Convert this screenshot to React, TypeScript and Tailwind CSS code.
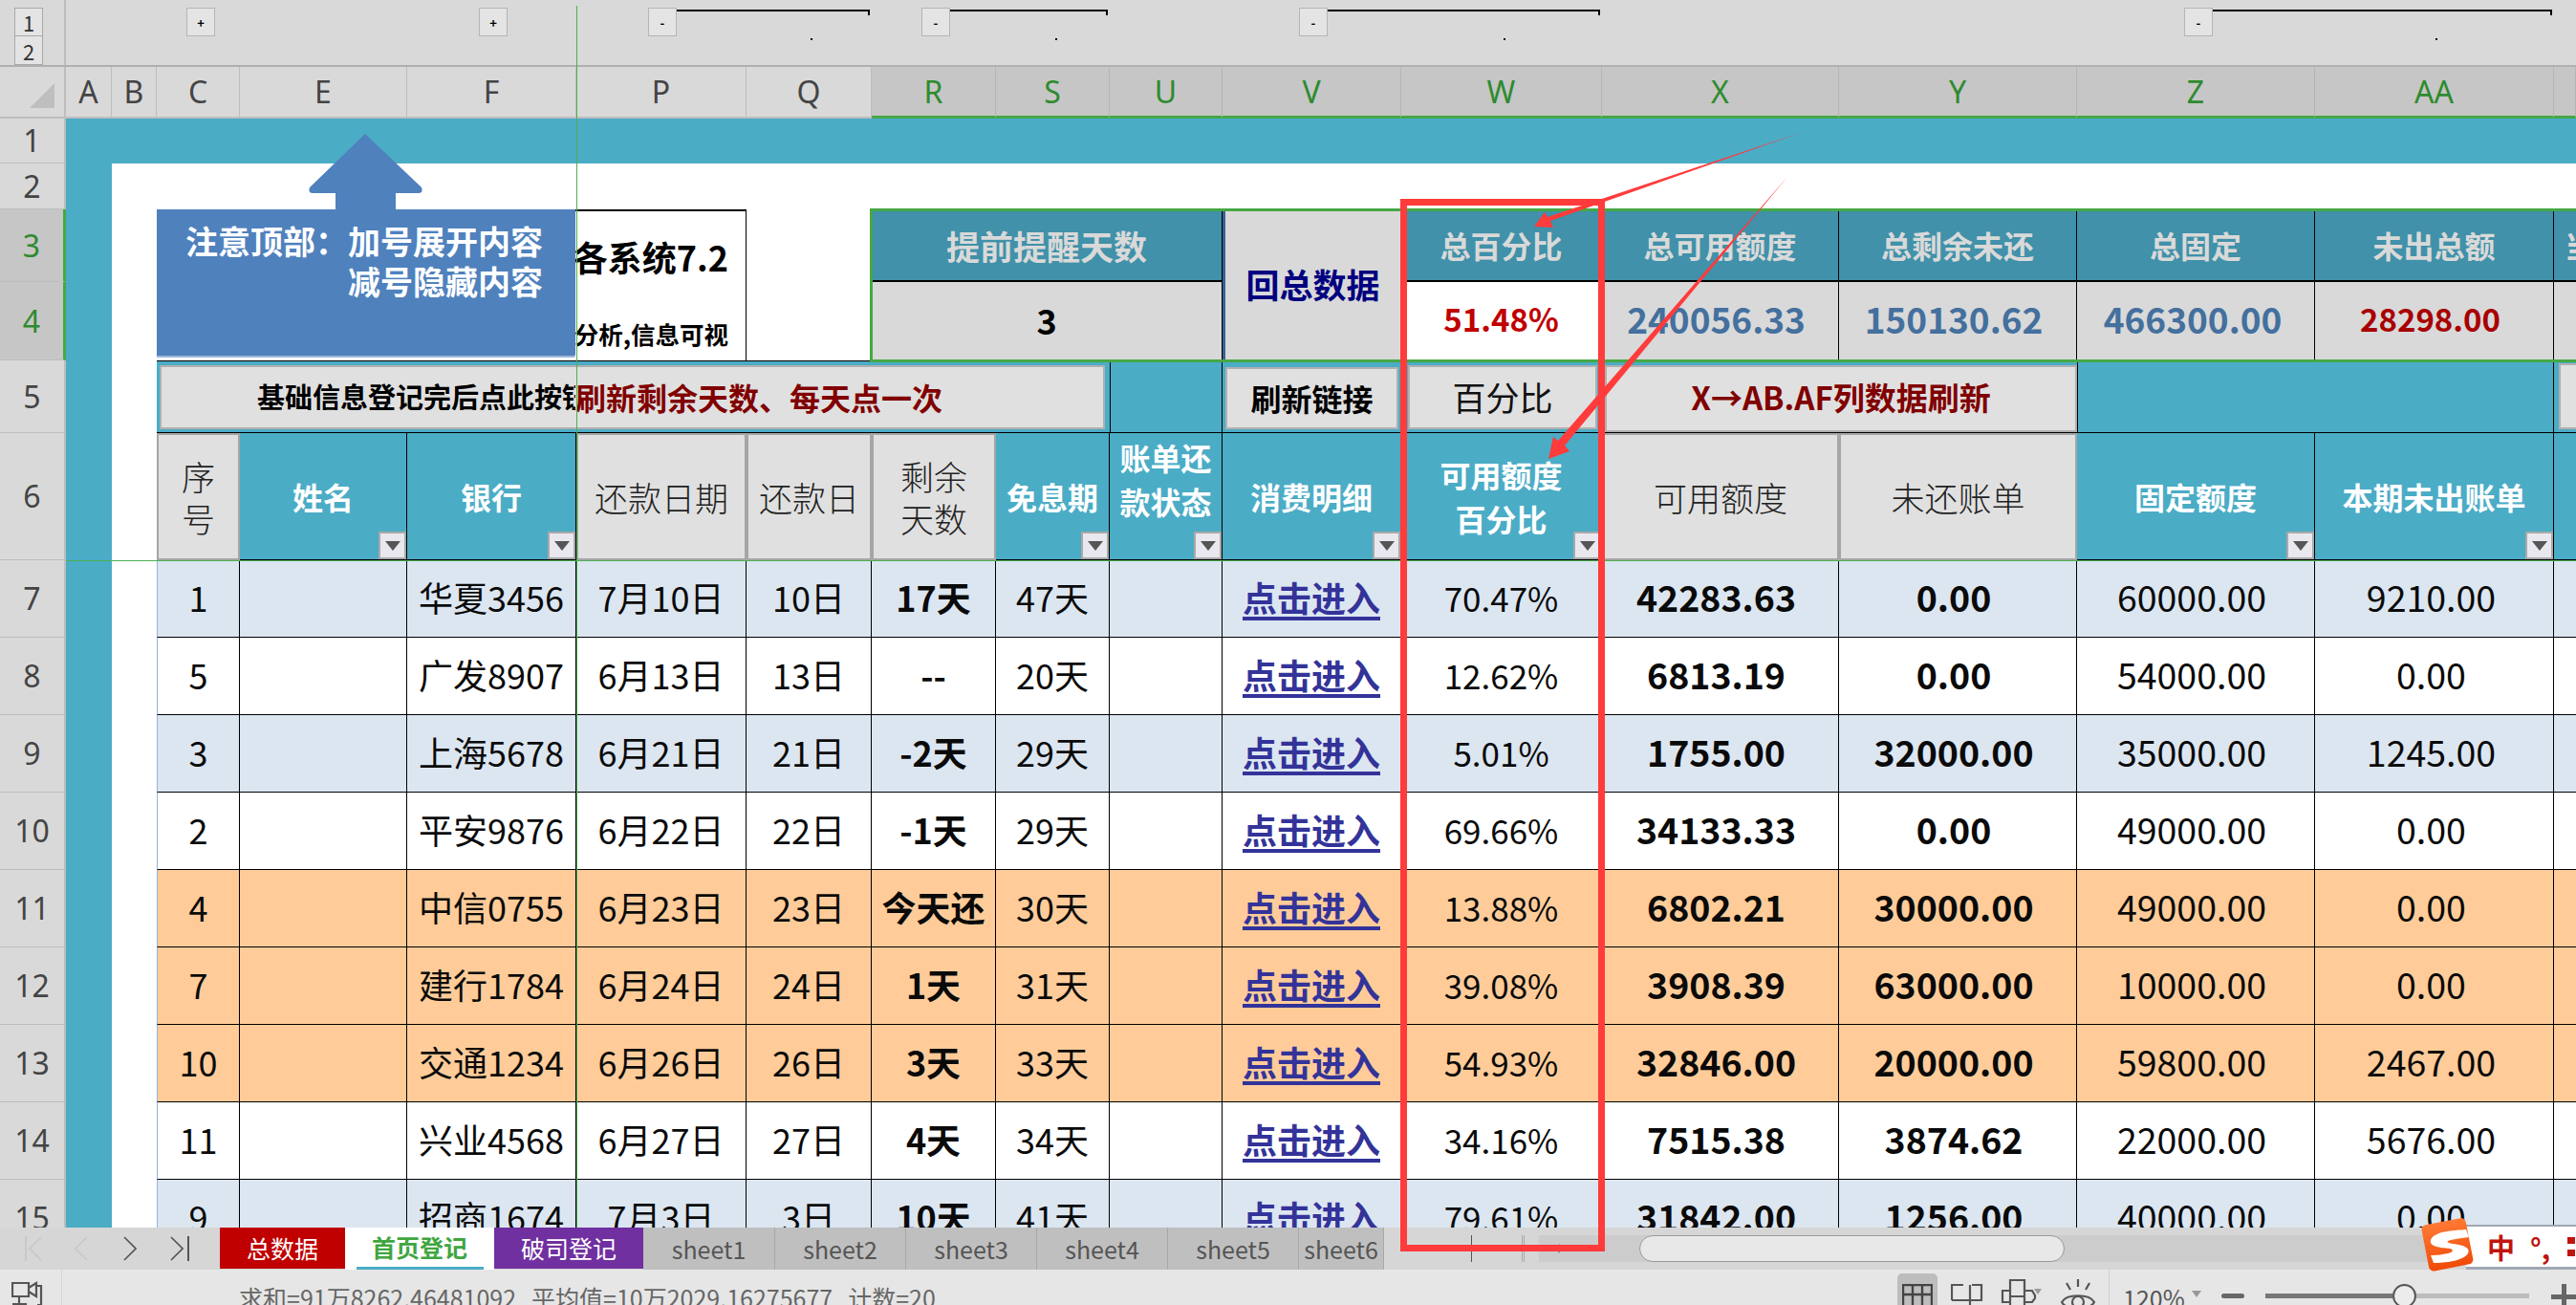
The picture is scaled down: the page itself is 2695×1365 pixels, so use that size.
const cols = 'grid grid-cols-[69px_48px_47px_87px_175px_177px_178px_131px_130px_119px_118px_187px_210px_248px_249px_249px_250px_23px]'

interface Row {
  no: number; seq: string; bank: string; date: string; day: string; left: string; free: string
  pct: string; avail: string; unpaid: string; fixed: string; bill: string; bg: string
}

const blue = 'bg-[#dce6f1]'
const white = 'bg-white'
const orange = 'bg-[#ffcc99]'

const rows: Row[] = [
  { no: 7, seq: '1', bank: '华夏3456', date: '7月10日', day: '10日', left: '17天', free: '47天', pct: '70.47%', avail: '42283.63', unpaid: '0.00', fixed: '60000.00', bill: '9210.00', bg: blue },
  { no: 8, seq: '5', bank: '广发8907', date: '6月13日', day: '13日', left: '--', free: '20天', pct: '12.62%', avail: '6813.19', unpaid: '0.00', fixed: '54000.00', bill: '0.00', bg: white },
  { no: 9, seq: '3', bank: '上海5678', date: '6月21日', day: '21日', left: '-2天', free: '29天', pct: '5.01%', avail: '1755.00', unpaid: '32000.00', fixed: '35000.00', bill: '1245.00', bg: blue },
  { no: 10, seq: '2', bank: '平安9876', date: '6月22日', day: '22日', left: '-1天', free: '29天', pct: '69.66%', avail: '34133.33', unpaid: '0.00', fixed: '49000.00', bill: '0.00', bg: white },
  { no: 11, seq: '4', bank: '中信0755', date: '6月23日', day: '23日', left: '今天还', free: '30天', pct: '13.88%', avail: '6802.21', unpaid: '30000.00', fixed: '49000.00', bill: '0.00', bg: orange },
  { no: 12, seq: '7', bank: '建行1784', date: '6月24日', day: '24日', left: '1天', free: '31天', pct: '39.08%', avail: '3908.39', unpaid: '63000.00', fixed: '10000.00', bill: '0.00', bg: orange },
  { no: 13, seq: '10', bank: '交通1234', date: '6月26日', day: '26日', left: '3天', free: '33天', pct: '54.93%', avail: '32846.00', unpaid: '20000.00', fixed: '59800.00', bill: '2467.00', bg: orange },
  { no: 14, seq: '11', bank: '兴业4568', date: '6月27日', day: '27日', left: '4天', free: '34天', pct: '34.16%', avail: '7515.38', unpaid: '3874.62', fixed: '22000.00', bill: '5676.00', bg: white },
  { no: 15, seq: '9', bank: '招商1674', date: '7月3日', day: '3日', left: '10天', free: '41天', pct: '79.61%', avail: '31842.00', unpaid: '1256.00', fixed: '40000.00', bill: '0.00', bg: blue },
]

const letters = [
  { t: 'A' }, { t: 'B' }, { t: 'C' }, { t: 'E' }, { t: 'F' }, { t: 'P' }, { t: 'Q' },
  { t: 'R', on: true }, { t: 'S', on: true }, { t: 'U', on: true }, { t: 'V', on: true }, { t: 'W', on: true },
  { t: 'X', on: true }, { t: 'Y', on: true }, { t: 'Z', on: true }, { t: 'AA', on: true }, { t: '', on: true },
]

function OutlineBtn({ label }: { label: string }) {
  return (
    <div className="w-[30px] h-[30px] shrink-0 border border-[#b5b5b5] bg-[#e4e4e4] flex items-center justify-center text-[13px] font-bold leading-none text-black">
      {label}
    </div>
  )
}

function Group({ className, dot }: { className: string; dot: string }) {
  return (
    <div className={`flex pt-[8px] ${className}`}>
      <OutlineBtn label="-" />
      <div className="flex-1 flex flex-col">
        <div className="h-[6px] mt-[2px] border-t-2 border-r-2 border-black" />
        <div className={`w-[2px] h-[2px] mt-[24px] bg-black ${dot}`} />
      </div>
    </div>
  )
}

function OutlineBar() {
  return (
    <div className={`${cols} h-[70px] bg-[#d9d9d9] border-b-2 border-[#b0b0b0]`}>
      <div className="border-r-2 border-[#bdbdbd] pl-[15px] pt-[8px] flex flex-col">
        <div className="w-[30px] h-[30px] border border-[#a8a8a8] bg-[#e4e4e4] flex items-center justify-center text-[22px] leading-none text-[#333]">1</div>
        <div className="w-[30px] h-[30px] border border-t-0 border-[#a8a8a8] bg-[#e4e4e4] flex items-center justify-center text-[22px] leading-none text-[#333]">2</div>
      </div>
      <div className="col-start-4 ml-[31px] pt-[8px]"><OutlineBtn label="+" /></div>
      <div className="col-start-6 ml-[75px] pt-[8px]"><OutlineBtn label="+" /></div>
      <Group className="col-start-7 col-span-2 ml-[75px] mr-[2px]" dot="ml-[140px]" />
      <Group className="col-start-9 col-span-2 ml-[52px] mr-[2px]" dot="ml-[110px]" />
      <Group className="col-start-12 col-span-2 ml-[80px] mr-[2px]" dot="ml-[184px]" />
      <Group className="col-start-16 col-span-2 ml-[112px] mr-[2px]" dot="ml-[233px]" />
    </div>
  )
}

function ColHeader() {
  return (
    <div className={`${cols} h-[54px] bg-[#d9d9d9] text-[32px] leading-none font-['Noto_Sans',sans-serif]`}>
      <div className="border-r-2 border-b-2 border-[#bdbdbd] overflow-hidden">
        <div className="mt-[17px] ml-[31px] w-0 h-0 border-l-[26px] border-l-transparent border-b-[26px] border-b-[#bfbfbf]" />
      </div>
      {letters.map((c, i) => (
        <div key={i} className={c.on
          ? 'flex items-center justify-center bg-[#c6c6c6] text-[#2e8b2e] border-r border-[#b5b5b5] border-b-[3px] border-b-[#45a845]'
          : 'flex items-center justify-center text-[#444] border-r border-b-2 border-[#bdbdbd]'}>
          {c.t}
        </div>
      ))}
    </div>
  )
}

function RowNo({ n, on }: { n: number; on?: boolean }) {
  return (
    <div className={`flex items-center justify-center text-[32px] leading-none font-['Noto_Sans',sans-serif] border-b border-[#bdbdbd] ${on ? 'bg-[#c6c6c6] text-[#2e8b2e] border-r-[3px] border-r-[#45a845]' : 'bg-[#d9d9d9] text-[#444] border-r-2 border-r-[#bdbdbd]'}`}>
      {n}
    </div>
  )
}

function Teal() {
  return <div className="bg-[#4bacc6]" />
}

const headDark = 'flex items-center justify-center bg-[#4091a9] text-[#d9d9d9] font-bold text-[32px] border-r border-b-2 border-black'
const valCell = 'flex items-center justify-center bg-[#d9d9d9] font-bold border-r border-black pb-[5px]'
const grayHead = 'flex items-center justify-center text-center bg-[#e0e0e0] border-2 border-[#a6a6a6] text-[35px] font-light leading-[44px] text-[#222]'
const btn = 'flex items-center justify-center bg-[#e0e0e0] border-2 border-[#b0b0b0] whitespace-nowrap'

function FilterBtn() {
  return (
    <div className="absolute right-0 bottom-0 w-[29px] h-[29px] bg-[#e8e8ee] border-2 border-[#a9a9a9] flex items-center justify-center">
      <div className="w-0 h-0 border-x-[8px] border-x-transparent border-t-[10px] border-t-[#555]" />
    </div>
  )
}

function TealHead({ children }: { children: React.ReactNode }) {
  return (
    <div className="relative flex items-center justify-center text-center bg-[#4bacc6] text-white font-bold text-[32px] leading-[46px] border-r border-b border-black">
      {children}
      <FilterBtn />
    </div>
  )
}

function Sheet() {
  const cell = 'flex items-center justify-center border-r border-b border-black text-[#0a0a0a] whitespace-nowrap pb-[4px]'
  return (
    <div className="flex-1 min-h-0 overflow-hidden bg-white">
      <div className={`${cols} grid-rows-[47px_48px_76px_82px_76px_133px_repeat(9,81px)] text-[36px] leading-none`}>
        {/* 第1、2行 */}
        <RowNo n={1} />
        <div className="col-span-17 bg-[#4bacc6]" />
        <RowNo n={2} />
        <Teal />
        <div className="col-span-16 bg-white" />

        {/* 第3、4行 */}
        <RowNo n={3} on />
        <Teal />
        <div className="bg-white row-span-2" />
        <div className="col-span-4 row-span-2 bg-white border-t-2 border-r border-black flex flex-col items-end pr-[18px] pt-[27px] text-black font-bold overflow-hidden">
          <div className="text-[36px] leading-[40px] whitespace-nowrap">各系统7.2</div>
          <div className="text-[25.5px] leading-[30px] mt-[46px] whitespace-nowrap">分析,信息可视</div>
        </div>
        <div className="row-span-2 bg-white" />
        <div className={`col-span-3 ${headDark} text-[35px]`}>提前提醒天数</div>
        <div className="row-span-2 bg-[#d9d9d9] border-l-[3px] border-l-[#366092] flex items-center justify-center text-[#000080] font-bold text-[35px] border-r border-black pb-[4px]">回总数据</div>
        <div className={headDark}>总百分比</div>
        <div className={headDark}>总可用额度</div>
        <div className={headDark}>总剩余未还</div>
        <div className={headDark}>总固定</div>
        <div className={headDark}>未出总额</div>
        <div className={`${headDark} justify-start overflow-hidden pl-[11px] whitespace-nowrap border-r-0`}>当前</div>

        <RowNo n={4} on />
        <Teal />
        <div className={`col-span-3 ${valCell} text-black text-[36px]`}>3</div>
        <div className="flex items-center justify-center bg-white font-bold border-r border-black text-[#c00000] text-[33px] pb-[5px]">51.48%</div>
        <div className={`${valCell} text-[#44709e] text-[37px] pr-[8px]`}>240056.33</div>
        <div className={`${valCell} text-[#44709e] text-[37px] pr-[8px]`}>150130.62</div>
        <div className={`${valCell} text-[#44709e] text-[37px] pr-[6px]`}>466300.00</div>
        <div className={`${valCell} text-[#a80000] text-[33px] pr-[8px]`}>28298.00</div>
        <div className="bg-[#d9d9d9]" />

        {/* 第5行 */}
        <RowNo n={5} />
        <Teal />
        <div className="bg-white" />
        <div className="col-span-7 bg-[#4bacc6] p-[3px] pt-[4px] pr-[5px] border-t border-b border-black">
          <div className={`${btn} h-full justify-start font-bold pb-[2px]`}>
            <div className="w-[433px] shrink-0 overflow-hidden pl-[100px] text-[29px] text-black">基础信息登记完后点此按钮</div>
            <div className="text-[32px] text-[#800000]">刷新剩余天数、每天点一次</div>
          </div>
        </div>
        <div className="bg-[#4bacc6] border-l border-r border-b border-black" />
        <div className="bg-[#4bacc6] p-[3px] pt-[7px] pr-[3px] border-b border-black"><div className={`${btn} h-full font-bold text-[32px] text-black pb-[2px]`}>刷新链接</div></div>
        <div className="bg-[#4bacc6] pl-[7px] pr-[5px] pt-[5px] pb-[3px] border-b border-black"><div className={`${btn} h-full text-[35px] text-[#111] pb-[3px]`}>百分比</div></div>
        <div className="col-span-2 bg-[#4bacc6] pl-[3px] pt-[5px] border-b border-black"><div className={`${btn} h-full font-bold text-[33px] text-[#800000] pb-[3px]`}>X→AB.AF列数据刷新</div></div>
        <div className="col-span-2 bg-[#4bacc6] border-l border-r border-b border-black" />
        <div className="bg-[#4bacc6] pl-[5px] pt-[3px] pb-[3px] border-b border-black"><div className="h-full bg-[#e0e0e0] border-2 border-r-0 border-[#b0b0b0]" /></div>

        {/* 第6行 */}
        <RowNo n={6} />
        <Teal />
        <div className="bg-white" />
        <div className={grayHead}>序<br />号</div>
        <TealHead>姓名</TealHead>
        <TealHead>银行</TealHead>
        <div className={grayHead}>还款日期</div>
        <div className={`${grayHead} text-[32px]`}>还款日</div>
        <div className={grayHead}>剩余<br />天数</div>
        <TealHead>免息期</TealHead>
        <TealHead><span className="pb-[36px]">账单还<br />款状态</span></TealHead>
        <TealHead>消费明细</TealHead>
        <TealHead>可用额度<br />百分比</TealHead>
        <div className={grayHead}>可用额度</div>
        <div className={grayHead}>未还账单</div>
        <TealHead>固定额度</TealHead>
        <TealHead>本期未出账单</TealHead>
        <div className="bg-[#4bacc6] border-b border-black" />

        {/* 数据行 */}
        {rows.map(r => (
          <div key={r.no} className="contents">
            <RowNo n={r.no} />
            <Teal />
            <div className="bg-white" />
            <div className={`${cell} ${r.bg} border-l border-l-[#95b3d7]`}>{r.seq}</div>
            <div className={`${cell} ${r.bg}`} />
            <div className={`${cell} ${r.bg}`}>{r.bank}</div>
            <div className={`${cell} ${r.bg}`}>{r.date}</div>
            <div className={`${cell} ${r.bg}`}>{r.day}</div>
            <div className={`${cell} ${r.bg} font-bold`}>{r.left}</div>
            <div className={`${cell} ${r.bg}`}>{r.free}</div>
            <div className={`${cell} ${r.bg}`} />
            <div className={`${cell} ${r.bg} font-bold text-[#333399] underline decoration-[4px] underline-offset-[5px]`}>点击进入</div>
            <div className={`${cell} ${r.bg} text-[35px]`}>{r.pct}</div>
            <div className={`${cell} ${r.bg} font-bold text-[37.5px] pr-[8px]`}>{r.avail}</div>
            <div className={`${cell} ${r.bg} font-bold text-[37.5px] pr-[8px]`}>{r.unpaid}</div>
            <div className={`${cell} ${r.bg} text-[37.5px] pr-[8px]`}>{r.fixed}</div>
            <div className={`${cell} ${r.bg} text-[37.5px] pr-[6px]`}>{r.bill}</div>
            <div className={`border-b border-black ${r.bg}`} />
          </div>
        ))}
      </div>
    </div>
  )
}

const sheetTabs = [
  { t: 'sheet1', w: 'w-[138px]' },
  { t: 'sheet2', w: 'w-[137px]' },
  { t: 'sheet3', w: 'w-[137px]' },
  { t: 'sheet4', w: 'w-[137px]' },
  { t: 'sheet5', w: 'w-[137px]' },
  { t: 'sheet6', w: 'w-[89px]' },
]

function Chevron({ left, className }: { left?: boolean; className: string }) {
  return (
    <svg className={className} width="14" height="26" viewBox="0 0 14 26" fill="none" stroke="currentColor" strokeWidth="1.6">
      <path d={left ? 'M13 1L1 13l12 12' : 'M1 1l12 12L1 25'} />
    </svg>
  )
}

function TabBar() {
  return (
    <div className="h-[44px] shrink-0 bg-[#d6d6d6] flex text-[25px] leading-none">
      <div className="w-[230px] shrink-0 flex items-center pl-[26px]">
        <div className="w-[2px] h-[26px] bg-[#c8c8c8]" />
        <Chevron left className="ml-[2px] text-[#c8c8c8]" />
        <Chevron left className="ml-[34px] text-[#c8c8c8]" />
        <Chevron className="ml-[37px] text-[#555]" />
        <Chevron className="ml-[35px] text-[#555]" />
        <div className="w-[2px] h-[26px] bg-[#555] ml-[4px]" />
      </div>
      <div className="w-[131px] h-[43px] bg-[#c00000] text-white flex items-center justify-center">总数据</div>
      <div className="w-[156px] h-[44px] bg-white text-[#3fa63f] font-bold flex flex-col items-center">
        <div className="flex-1 flex items-center">首页登记</div>
        <div className="w-[133px] h-[3px] bg-[#4bacc6]" />
      </div>
      <div className="w-[156px] h-[43px] bg-[#7030a0] text-white flex items-center justify-center">破司登记</div>
      {sheetTabs.map(s => (
        <div key={s.t} className={`${s.w} h-[44px] bg-[#bfbfbf] text-[#555] border-r border-[#a8a8a8] flex items-center justify-center`}>{s.t}</div>
      ))}
      <div className="flex-1 flex pt-[8px] pb-[8px]">
        <div className="w-[91px] shrink-0" />
        <div className="w-[1px] h-[28px] bg-[#555]" />
        <div className="w-[52px] shrink-0" />
        <div className="w-[3px] h-[28px] border-x border-[#aaa]" />
        <div className="w-[15px] shrink-0" />
        <div className="flex-1 bg-[#cccccc] flex items-stretch">
          <div className="w-0 h-0 self-center ml-[16px] border-y-[5px] border-y-transparent border-r-[6px] border-r-[#888]" />
          <div className="ml-[83px] w-[445px] bg-[#e8e8e8] border border-[#999] rounded-full" />
        </div>
      </div>
    </div>
  )
}

function StatusBar() {
  return (
    <div className="h-[37px] shrink-0 bg-[#e6e6e6] flex overflow-hidden">
      <div className="w-[65px] shrink-0 border-r border-[#d4d4d4] pl-[12px] pt-[12px]">
        <svg width="34" height="34" viewBox="0 0 34 34" fill="none" stroke="#555" strokeWidth="2.2">
          <path d="M1 2h17v14H1z" />
          <path d="M18 7l8-5v14l-8-5" />
          <path d="M8 16v8M1 24h14v10" />
          <path d="M27 5h4v20h-4" />
        </svg>
      </div>
      <div className="pl-[185px] pt-[13px] flex gap-[16px] text-[25px] leading-[32px] text-[#666] whitespace-nowrap">
        <span>求和=91万8262.46481092</span>
        <span>平均值=10万2029.16275677</span>
        <span>计数=20</span>
      </div>
      <div className="flex-1" />
      <div className="flex shrink-0 w-[710px] text-[#555]">
        <div className="mt-[4px] w-[46px] h-[33px] bg-[#bdbdbd] rounded-t-[5px] flex justify-center pt-[11px]">
          <svg width="32" height="32" viewBox="0 0 32 32" fill="none" stroke="#444" strokeWidth="2.4">
            <path d="M1 1h30v30H1zM1 11h30M11 1v30M21 1v30" />
          </svg>
        </div>
        <svg className="ml-[14px] mt-[14px] shrink-0" width="34" height="34" viewBox="0 0 34 34" fill="none" stroke="#555" strokeWidth="2.2">
          <path d="M1 18V2h12M22 2h10v16M1 18h32M20 2v30M1 26h32" />
        </svg>
        <svg className="ml-[17px] mt-[10px] shrink-0" width="44" height="34" viewBox="0 0 44 34" fill="none" stroke="#555" strokeWidth="2.2">
          <path d="M11 1h15v30H11zM11 12H3v12h8M26 12h8l3 5v3l-3 4h-8M11 18h15" />
          <path d="M36 10h8l-4 6z" fill="#999" stroke="none" />
        </svg>
        <svg className="ml-[20px] mt-[10px] shrink-0" width="36" height="34" viewBox="0 0 36 34" fill="none" stroke="#555" strokeWidth="2.2">
          <path d="M18 0v8M6 4l4 7M30 4l-4 7M1 24c5-9 29-9 34 0c-5 9-29 9-34 0z" />
          <circle cx="18" cy="24" r="6" />
        </svg>
        <div className="ml-[14px] w-[1px] h-[37px] bg-[#cfcfcf] shrink-0" />
        <div className="ml-[14px] w-[64px] shrink-0 pt-[13px] text-[25px] leading-[32px] text-[#555]">120%</div>
        <div className="ml-[8px] mt-[22px] w-0 h-0 border-x-[5px] border-x-transparent border-t-[7px] border-t-[#999]" />
        <div className="ml-[21px] mt-[25px] w-[24px] h-[5px] bg-[#666] rounded-sm shrink-0" />
        <div className="ml-[22px] mt-[25px] w-[133px] h-[5px] bg-[#777] shrink-0" />
        <div className="mt-[15px] w-[25px] h-[25px] rounded-full border-2 border-[#555] bg-[#ececec] shrink-0" />
        <div className="mt-[25px] w-[118px] h-[5px] bg-[#bcbcbc] shrink-0" />
        <div className="ml-[23px] mt-[15px] w-[26px] h-[26px] relative shrink-0">
          <div className="absolute left-0 top-[11px] w-[26px] h-[5px] bg-[#666]" />
          <div className="absolute left-[11px] top-0 w-[5px] h-[26px] bg-[#666]" />
        </div>
      </div>
    </div>
  )
}

function Overlays() {
  return (
    <>
      {/* 冻结窗格线 */}
      <div className="absolute left-[603px] top-[6px] w-[1px] h-[1278px] bg-[#4caf50]" />
      <div className="absolute left-[69px] top-[586px] w-[2626px] h-[1px] bg-[#4caf50]" />
      {/* 选区 */}
      <div className="absolute left-[910px] top-[218px] w-[1785px] h-[161px] border-[3px] border-r-0 border-[#45a845]" />
      {/* 蓝色提示 */}
      <svg className="absolute left-[323px] top-[140px]" width="120" height="80" viewBox="0 0 120 80">
        <path d="M59 0L118 56q2 6-3 6H91v18H28V62H4q-5 0-3-6z" fill="#4f81bd" />
      </svg>
      <div className="absolute left-[164px] top-[219px] w-[438px] h-[153px] bg-[#4f81bd] rounded-br-[2px] shadow-[0_2px_0_#9db8d9] text-white font-bold text-[34px] leading-[42px] text-right pr-[34px] pt-[12px] whitespace-nowrap">
        <div>注意顶部：加号展开内容</div>
        <div>减号隐藏内容</div>
      </div>
      {/* 红框和箭头 */}
      <div className="absolute left-[1465px] top-[208px] w-[214px] h-[1101px] border-[7px] border-[#ff3b3b]" />
      <svg className="absolute inset-0 pointer-events-none" width="2695" height="1365" viewBox="0 0 2695 1365">
        <polygon points="1886,138 1622,231 1625,238 1605,237 1616,222 1619,227" fill="#ff3b3b" />
        <polygon points="1870,185 1637,466 1642,472 1620,480 1625,457 1630,461" fill="#ff3b3b" />
      </svg>
      {/* 输入法状态条 */}
      <div className="absolute left-[2580px] top-[1281px] w-[115px] h-[47px] bg-white border-t-2 border-b-[3px] border-[#a0a8b4] flex items-center pl-[22px] overflow-hidden text-[#c0140f] font-bold text-[29px] leading-none">
        <span>中</span>
        <span className="ml-[16px]">°,</span>
        <div className="ml-[18px] w-[8px] h-[20px] shrink-0 border-y-[7px] border-[#c0140f]" />
      </div>
      <svg className="absolute left-[2532px] top-[1273px]" width="60" height="58" viewBox="0 0 60 58">
        <defs>
          <linearGradient id="sg" x1="0" y1="0" x2="0" y2="1">
            <stop offset="0" stopColor="#ff7a35" />
            <stop offset="1" stopColor="#f04a08" />
          </linearGradient>
        </defs>
        <rect x="5" y="4" width="47" height="49" rx="5" transform="rotate(-11 30 29)" fill="url(#sg)" />
        <path d="M48 13C34 14 14 15 11 24c-2 7 10 8 20 9c5 1 3 4-2 5c-5 1-10 2-18 2l3 8c12 0 31-2 36-10c3-6-5-9-16-10c-7-1-7-3-2-4c5-1 11-2 19-3z" fill="#fff" />
      </svg>
    </>
  )
}

export default function App() {
  return (
    <div className="relative w-[2695px] h-[1365px] overflow-hidden flex flex-col bg-white font-['Noto_Sans_CJK_SC','Noto_Sans',sans-serif]">
      <OutlineBar />
      <ColHeader />
      <Sheet />
      <TabBar />
      <StatusBar />
      <Overlays />
    </div>
  )
}
